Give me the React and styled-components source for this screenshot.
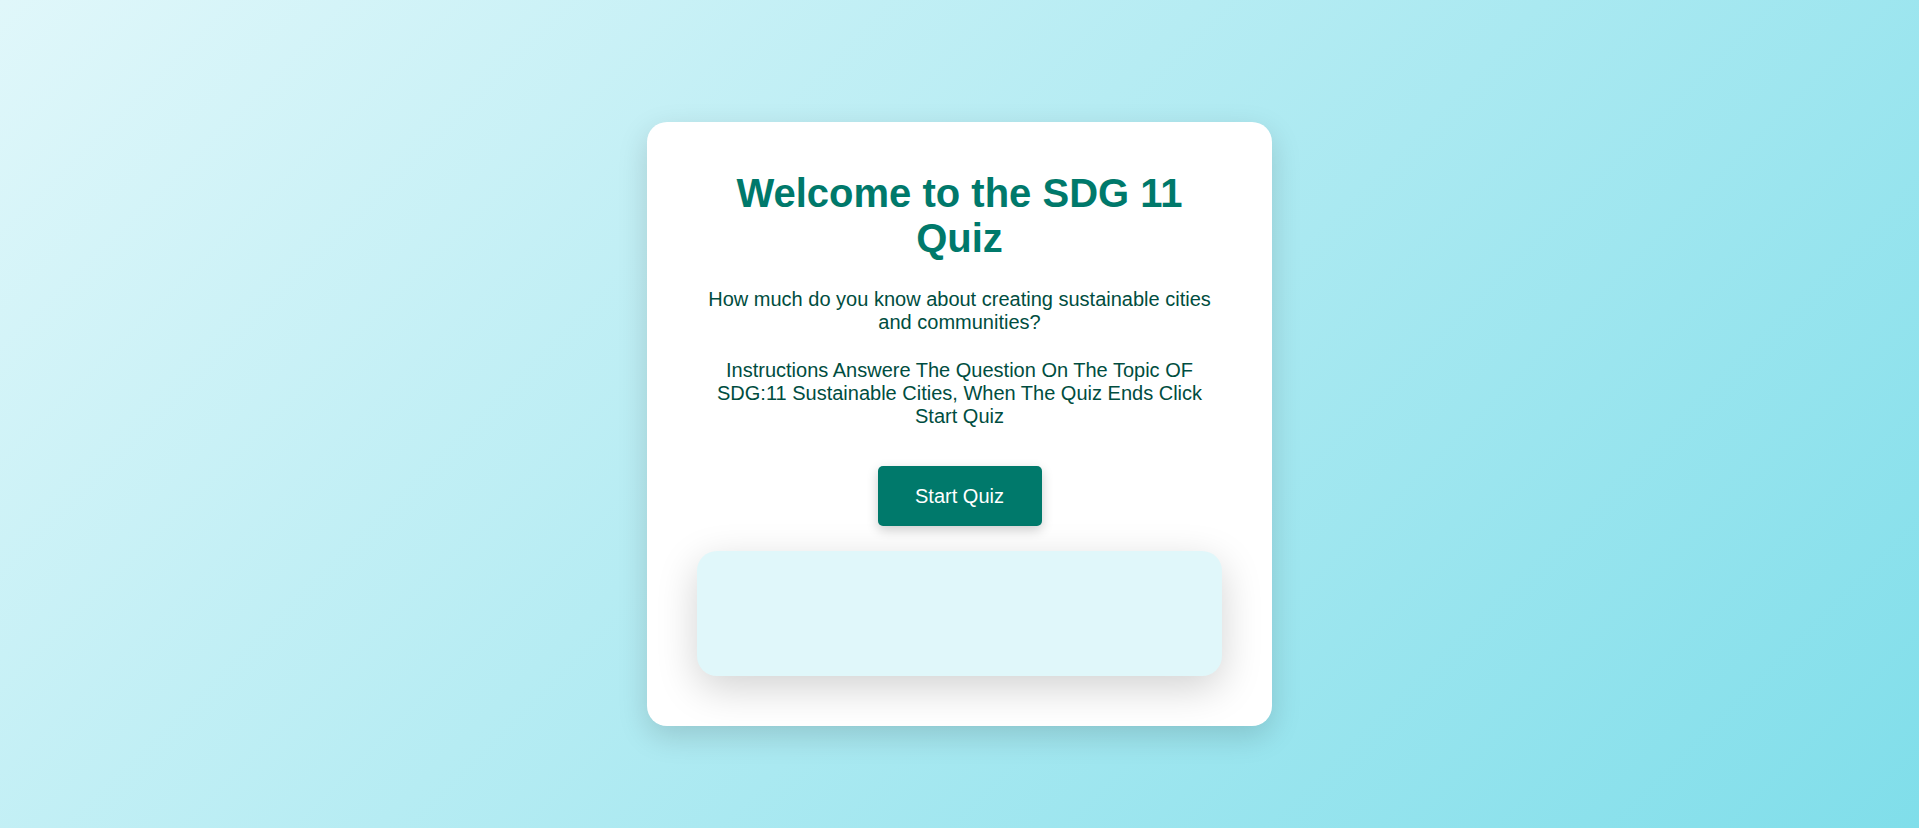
import styled, { createGlobalStyle } from "styled-components";

const GlobalStyle = createGlobalStyle`
  html, body {
    margin: 0;
    padding: 0;
  }

  body {
    font-family: "Liberation Sans", Arial, sans-serif;
    background: linear-gradient(135deg, #e0f7fa, #80deea);
    min-height: 100vh;
  }
`;

const Page = styled.div`
  min-height: 100vh;
  box-sizing: border-box;
  display: flex;
  justify-content: center;
  align-items: flex-start;
  padding-top: 122px;
`;

const Card = styled.div`
  width: 625px;
  box-sizing: border-box;
  background: #fff;
  border-radius: 20px;
  box-shadow: 0 10px 30px rgba(0, 0, 0, 0.15);
  padding: 49px 50px 50px;
  text-align: center;
  display: flex;
  flex-direction: column;
  align-items: center;
`;

const Title = styled.h1`
  font-size: 40px;
  font-weight: bold;
  color: #00796b;
  margin: 0 0 27px;
`;

const Text = styled.p`
  font-size: 20px;
  color: #004d40;
  margin: 0 0 ${(p) => p.$gap}px;
`;

const StartButton = styled.button`
  font-family: inherit;
  font-size: 20px;
  line-height: 23px;
  color: #fff;
  background-color: #00796b;
  border: none;
  border-radius: 5px;
  width: 164px;
  height: 60px;
  padding: 0;
  cursor: pointer;
  box-shadow: 0 4px 12px rgba(0, 0, 0, 0.2);
  margin-bottom: 25px;

  &:hover {
    background-color: #00695c;
  }
`;

const Results = styled.div`
  align-self: stretch;
  height: 125px;
  background: #e0f7fa;
  border-radius: 20px;
  box-shadow: 0 12px 40px rgba(0, 0, 0, 0.18);
`;

const App = () => (
  <>
    <GlobalStyle />
    <Page>
      <Card>
        <Title>Welcome to the SDG 11 Quiz</Title>
        <Text $gap={25}>
          How much do you know about creating sustainable cities and communities?
        </Text>
        <Text $gap={38}>
          Instructions Answere The Question On The Topic OF SDG:11 Sustainable
          Cities, When The Quiz Ends Click Start Quiz
        </Text>
        <StartButton>Start Quiz</StartButton>
        <Results />
      </Card>
    </Page>
  </>
);

export default App;
